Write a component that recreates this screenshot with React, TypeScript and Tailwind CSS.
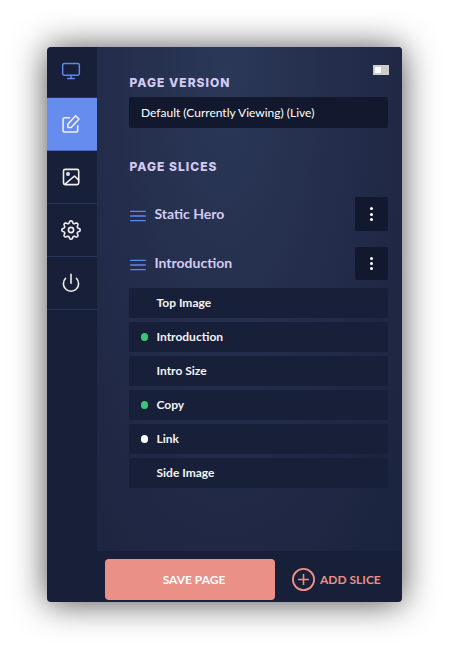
import React from "react";
import { FiMonitor } from "react-icons/fi";

const fields = [
  { label: "Top Image", dot: "" },
  { label: "Introduction", dot: "bg-[#3ac577]" },
  { label: "Intro Size", dot: "" },
  { label: "Copy", dot: "bg-[#3ac577]" },
  { label: "Link", dot: "bg-white" },
  { label: "Side Image", dot: "" },
];

// Gear outline with eight rounded teeth, one of them pointing straight up.
const gearPoints = Array.from({ length: 128 }, (_, i) => {
  const angle = (i / 128) * Math.PI * 2;
  const wave = Math.cos(8 * angle);
  const radius = 8.05 + 1.15 * Math.sign(wave) * Math.pow(Math.abs(wave), 0.6);
  return `${(10 + radius * Math.sin(angle)).toFixed(2)},${(10 - radius * Math.cos(angle)).toFixed(2)}`;
}).join(" ");

function Icon({ children }: { children: React.ReactNode }) {
  return (
    <svg viewBox="0 0 20 20" className="size-5 fill-none stroke-current" strokeWidth="1.6" strokeLinecap="round" strokeLinejoin="round">
      {children}
    </svg>
  );
}

function Slice({ name, className, titleClass, buttonClass }: { name: string; className: string; titleClass: string; buttonClass: string }) {
  return (
    <div className={`flex items-center ${className}`}>
      <svg viewBox="0 0 16 12" className="mt-[3px] ml-px h-3 w-4 stroke-[#5f86ea]" strokeWidth="1.4" strokeLinecap="round">
        <path d="M.7 1.4h14.6M.7 6h14.6M.7 10.6h14.6" />
      </svg>
      <h3 className={`ml-[8.5px] flex-1 text-[14px] leading-5 font-bold text-[#d3cbf4] ${titleClass}`}>{name}</h3>
      <button className={`flex w-[33px] flex-col items-center justify-center gap-[2.3px] rounded-[2px] bg-[#12182d] ${buttonClass}`}>
        <span className="size-[3px] rounded-full bg-white" />
        <span className="size-[3px] rounded-full bg-white" />
        <span className="size-[3px] rounded-full bg-white" />
      </button>
    </div>
  );
}

export default function App() {
  return (
    <div className="h-[650px] w-[450px] overflow-hidden bg-white p-[47px] font-['Lato',sans-serif]">
      <div className="flex h-[555px] w-[355px] overflow-hidden rounded-[4px] bg-[#181f38] shadow-[0_1px_34px_rgba(0,0,0,0.7)]">
        <nav className="flex w-[50px] shrink-0 flex-col text-[#eeeeee]">
          <a className="flex h-[51px] items-center justify-center border-b border-[#263460] pr-[2px] pb-0.5 text-[#5f86ea]">
            <FiMonitor size={20} strokeWidth={1.8} />
          </a>
          <a className="flex h-[53px] items-center justify-center border-b border-[#4668bd] bg-[#668cef] pr-[2px]">
            <Icon>
              <path d="M8.6 3.8H3.9a1.8 1.8 0 0 0-1.8 1.8v10.6A1.8 1.8 0 0 0 3.9 18h11a1.8 1.8 0 0 0 1.8-1.8v-4.4" />
              <path d="M14.6 1.8L18 5l-7.8 8.5H6.9v-3.4z" />
            </Icon>
          </a>
          <a className="flex h-[53px] items-center justify-center border-b border-[#263460] pr-[2px]">
            <Icon>
              <rect x="2.5" y="2.4" width="15.2" height="15.2" rx="1.6" />
              <circle cx="7" cy="6.9" r="1.2" />
              <path d="M4 17.2l9.5-8.2 4.2 4.1" />
            </Icon>
          </a>
          <a className="flex h-[53px] items-center justify-center border-b border-[#263460] pr-[2px]">
            <Icon>
              <polygon points={gearPoints} />
              <circle cx="10" cy="10" r="2.6" />
            </Icon>
          </a>
          <a className="flex h-[53px] items-center justify-center border-b border-[#263460] pr-[2px]">
            <Icon>
              <path d="M15.4 5.3a7.6 7.6 0 1 1-10.8 0M10 1.3v9" />
            </Icon>
          </a>
        </nav>
        <main className="flex w-[305px] flex-col">
          <section className="flex h-[504px] flex-col bg-[radial-gradient(ellipse_290px_760px_at_42%_4%,#2b3858_0%,#202845_60%,#18213a_100%)] pr-[14px] pl-8">
            <div className="mt-[18px] -mr-px ml-auto h-[10px] w-4 bg-[#cccccc] p-[2px]">
              <div className="size-[6px] bg-white" />
            </div>
            <h2 className="mt-px pl-[0.5px] font-['Inter',sans-serif] text-[12px] leading-[14px] font-extrabold tracking-[1.02px] text-[#d3cbf4]">PAGE VERSION</h2>
            <div className="mt-[7px] flex h-[31px] items-center rounded-[2px] bg-[#12182d] pl-3 text-[12px] text-white">
              Default (Currently Viewing) (Live)
            </div>
            <h2 className="mt-8 pl-[0.5px] font-['Inter',sans-serif] text-[12px] leading-[14px] font-extrabold tracking-[1.02px] text-[#d3cbf4]">PAGE SLICES</h2>
            <Slice name="Static Hero" className="mt-[23px]" titleClass="" buttonClass="h-[34px]" />
            <Slice name="Introduction" className="mt-4" titleClass="-mt-[2px]" buttonClass="h-[33px]" />
            <ul className="mt-2 flex flex-col gap-1">
              {fields.map((field) => (
                <li key={field.label} className="flex h-[30px] items-center rounded-[2px] bg-[#181f38] pl-3 text-[12px] font-bold text-[#f4f4f4]">
                  <span className={`h-2 w-[7px] rounded-full ${field.dot}`} />
                  <span className="ml-[8.5px]">{field.label}</span>
                </li>
              ))}
            </ul>
          </section>
          <footer className="flex h-[51px] items-start pt-2 pl-2 text-[12px] font-bold">
            <button className="h-[41px] w-[170px] rounded-[4px] bg-[#ea9087] pl-[8px] text-white">SAVE PAGE</button>
            <button className="ml-[17px] flex h-[41px] items-center gap-[5px] text-[#ea9087]">
              <svg viewBox="0 0 23 23" className="size-[23px] fill-none stroke-current">
                <circle cx="11.5" cy="11.5" r="10.6" strokeWidth="1.8" />
                <path d="M11.5 6v11M6 11.5h11" strokeWidth="1.6" />
              </svg>
              ADD SLICE
            </button>
          </footer>
        </main>
      </div>
    </div>
  );
}
